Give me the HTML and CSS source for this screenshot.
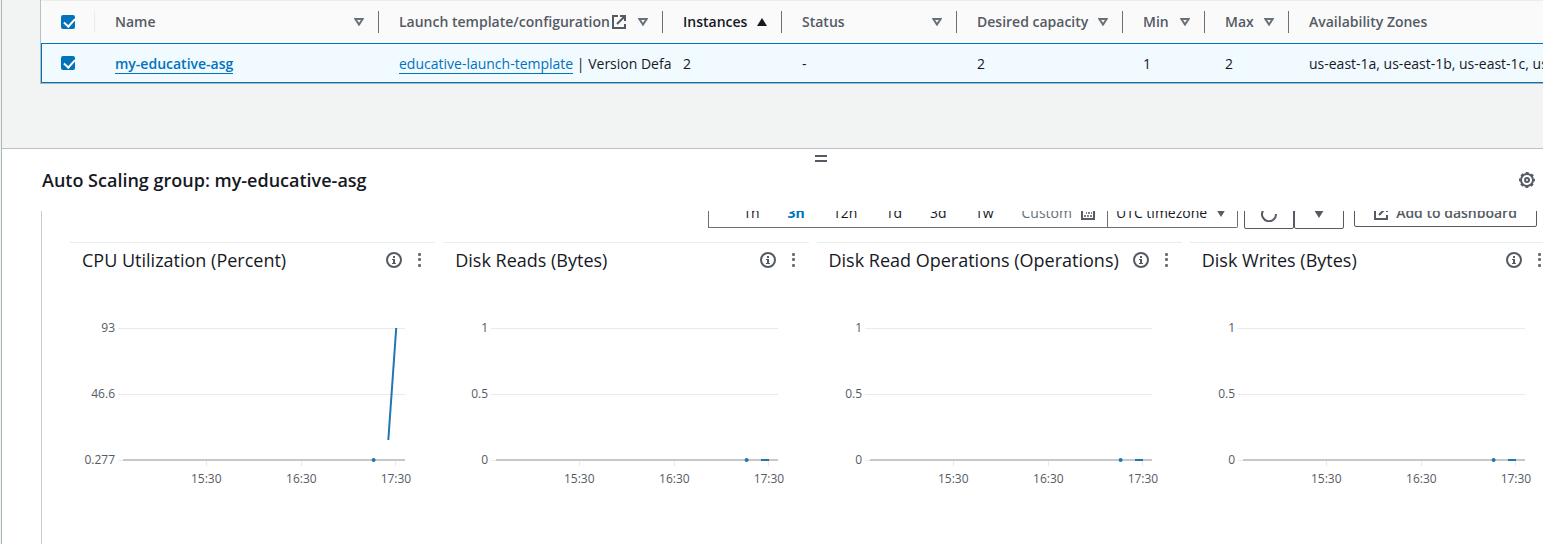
FILE: index.html
```html
<!DOCTYPE html>
<html lang="en">
<head>
<meta charset="utf-8">
<title>Auto Scaling groups</title>
<link rel="stylesheet" href="styles.css">
</head>
<body>
<svg class="sprite" aria-hidden="true">
  <symbol id="sort" viewBox="0 0 10 8"><path d="M1.3 1h7.4L5 6.6z" fill="none" stroke="currentColor" stroke-width="2"/></symbol>
  <symbol id="sorted" viewBox="0 0 10 8"><path d="M5 0l5 8H0z" fill="currentColor"/></symbol>
  <symbol id="caret" viewBox="0 0 10 8"><path d="M0 0h10L5 8z" fill="currentColor"/></symbol>
  <symbol id="external" viewBox="0 0 14 14"><path d="M6 1H1v12h12V9M8 1h5v5M13 1L5 9" fill="none" stroke="currentColor" stroke-width="2"/></symbol>
  <symbol id="info" viewBox="0 0 16 16"><circle cx="8" cy="8" r="7" fill="none" stroke="currentColor" stroke-width="2"/><path d="M7 4h2v2H7zM6 7h3v4h1v1H6v-1h1V8H6z" fill="currentColor"/></symbol>
  <symbol id="kebab" viewBox="0 0 4 14"><rect width="3" height="3" rx="1" fill="currentColor"/><rect y="5" width="3" height="3" rx="1" fill="currentColor"/><rect y="11" width="3" height="3" rx="1" fill="currentColor"/></symbol>
  <symbol id="calendar" viewBox="0 0 14 14"><path d="M1 3h12v10H1zM1 4h12M4 0v3M10 0v3" fill="none" stroke="currentColor" stroke-width="2"/><path d="M3 10h2M6 10h2M9 10h2M5 7h1M7 7h2M10 7h1" stroke="currentColor" stroke-width="1.5"/></symbol>
  <symbol id="refresh" viewBox="0 0 16 16"><path d="M15 8A7 7 0 1 1 12 2.500M12 0v4H8" fill="none" stroke="currentColor" stroke-width="2"/></symbol>
  <symbol id="gear" viewBox="0 0 16 16"><g fill="none" stroke="currentColor"><circle cx="8" cy="8" r="6" stroke-width="2"/><circle cx="8" cy="8" r="7.100" stroke-width="1.800" stroke-dasharray="2.900 2.676" stroke-dashoffset="1.450"/><circle cx="8" cy="8" r="2" stroke-width="2"/></g></symbol>
</svg>

<main class="console">
  <section class="groups">
    <table class="grid-table">
      <colgroup><col class="w-check"><col class="w-name"><col class="w-name"><col class="w-inst"><col class="w-status"><col class="w-desired"><col class="w-min"><col class="w-max"><col></colgroup>
      <thead>
        <tr>
          <th class="check light"><input type="checkbox" checked aria-label="Select all groups"></th>
          <th><div class="head">Name<svg class="sort"><use href="#sort"/></svg></div></th>
          <th><div class="head"><span class="with-icon">Launch template/configuration <svg class="i14"><use href="#external"/></svg></span><svg class="sort"><use href="#sort"/></svg></div></th>
          <th class="active"><div class="head">Instances<svg class="sort"><use href="#sorted"/></svg></div></th>
          <th><div class="head">Status<svg class="sort"><use href="#sort"/></svg></div></th>
          <th><div class="head">Desired capacity<svg class="sort"><use href="#sort"/></svg></div></th>
          <th><div class="head">Min<svg class="sort"><use href="#sort"/></svg></div></th>
          <th><div class="head">Max<svg class="sort"><use href="#sort"/></svg></div></th>
          <th class="last"><div class="head">Availability Zones</div></th>
        </tr>
      </thead>
      <tbody>
        <tr>
          <td class="check"><input type="checkbox" checked aria-label="Select my-educative-asg"></td>
          <td><a class="strong" href="#">my-educative-asg</a></td>
          <td><a href="#">educative-launch-template</a> | Version Defa</td>
          <td>2</td>
          <td>-</td>
          <td>2</td>
          <td>1</td>
          <td>2</td>
          <td>us-east-1a, us-east-1b, us-east-1c, us-east-1d</td>
        </tr>
      </tbody>
    </table>
  </section>

  <section class="panel">
    <button class="handle" aria-label="Resize panel"></button>
    <header class="panel-head">
      <h2>Auto Scaling group: my-educative-asg</h2>
      <button class="icon-btn" aria-label="Preferences"><svg class="i16"><use href="#gear"/></svg></button>
    </header>
    <div class="scroller">
      <div class="toolbar">
        <div class="ranges">
          <button>1h</button><button class="on">3h</button><button>12h</button><button>1d</button><button>3d</button><button>1w</button><button class="custom">Custom <svg class="i14"><use href="#calendar"/></svg></button>
        </div>
        <div class="zone">
          <select aria-label="Timezone"><option>UTC timezone</option></select>
          <svg class="caret"><use href="#caret"/></svg>
        </div>
        <div class="refresh">
          <button aria-label="Refresh"><svg class="i16"><use href="#refresh"/></svg></button>
          <button aria-label="Refresh options"><svg class="caret"><use href="#caret"/></svg></button>
        </div>
        <button class="add"><svg class="i14"><use href="#external"/></svg>Add to dashboard</button>
      </div>

      <div class="cards">
        <article class="card">
          <header><h3>CPU Utilization (Percent)</h3><button class="icon-btn" aria-label="Info"><svg class="i16"><use href="#info"/></svg></button><button class="icon-btn" aria-label="Menu"><svg class="kebab"><use href="#kebab"/></svg></button></header>
          <svg class="chart" role="img" aria-label="CPU Utilization">
            <svg class="plot" x="53" y="0">
              <g class="rule"><line x1="-5" x2="100%" y1="28" y2="28"/><line x1="-5" x2="100%" y1="94" y2="94"/><line x1="-5" x2="0" y1="160" y2="160"/><line x1="29.500%" x2="29.500%" y1="160" y2="166"/><line x1="63.200%" x2="63.200%" y1="160" y2="166"/><line x1="96.700%" x2="96.700%" y1="160" y2="166"/></g>
              <line class="axis" x1="0" x2="100%" y1="160" y2="160"/>
              <g class="ylab"><text x="-8" y="32">93</text><text x="-8" y="98">46.6</text><text x="-8" y="164">0.277</text></g>
              <g class="xlab"><text x="29.500%" y="183">15:30</text><text x="63.200%" y="183">16:30</text><text x="96.700%" y="183">17:30</text></g>
              <circle class="dot" cx="88.800%" cy="160" r="2"/>
              <line class="series" x1="94%" y1="140" x2="96.800%" y2="28"/>
            </svg>
          </svg>
        </article>
        <article class="card">
          <header><h3>Disk Reads (Bytes)</h3><button class="icon-btn" aria-label="Info"><svg class="i16"><use href="#info"/></svg></button><button class="icon-btn" aria-label="Menu"><svg class="kebab"><use href="#kebab"/></svg></button></header>
          <svg class="chart" role="img" aria-label="Disk Reads">
            <svg class="plot" x="53" y="0">
              <g class="rule"><line x1="-5" x2="100%" y1="28" y2="28"/><line x1="-5" x2="100%" y1="94" y2="94"/><line x1="-5" x2="0" y1="160" y2="160"/><line x1="29.500%" x2="29.500%" y1="160" y2="166"/><line x1="63.200%" x2="63.200%" y1="160" y2="166"/><line x1="96.700%" x2="96.700%" y1="160" y2="166"/></g>
              <line class="axis" x1="0" x2="100%" y1="160" y2="160"/>
              <g class="ylab"><text x="-8" y="32">1</text><text x="-8" y="98">0.5</text><text x="-8" y="164">0</text></g>
              <g class="xlab"><text x="29.500%" y="183">15:30</text><text x="63.200%" y="183">16:30</text><text x="96.700%" y="183">17:30</text></g>
              <circle class="dot" cx="88.800%" cy="160" r="2"/>
              <line class="series flat" x1="94%" y1="160" x2="96.800%" y2="160"/>
            </svg>
          </svg>
        </article>
        <article class="card">
          <header><h3>Disk Read Operations (Operations)</h3><button class="icon-btn" aria-label="Info"><svg class="i16"><use href="#info"/></svg></button><button class="icon-btn" aria-label="Menu"><svg class="kebab"><use href="#kebab"/></svg></button></header>
          <svg class="chart" role="img" aria-label="Disk Read Operations">
            <svg class="plot" x="53" y="0">
              <g class="rule"><line x1="-5" x2="100%" y1="28" y2="28"/><line x1="-5" x2="100%" y1="94" y2="94"/><line x1="-5" x2="0" y1="160" y2="160"/><line x1="29.500%" x2="29.500%" y1="160" y2="166"/><line x1="63.200%" x2="63.200%" y1="160" y2="166"/><line x1="96.700%" x2="96.700%" y1="160" y2="166"/></g>
              <line class="axis" x1="0" x2="100%" y1="160" y2="160"/>
              <g class="ylab"><text x="-8" y="32">1</text><text x="-8" y="98">0.5</text><text x="-8" y="164">0</text></g>
              <g class="xlab"><text x="29.500%" y="183">15:30</text><text x="63.200%" y="183">16:30</text><text x="96.700%" y="183">17:30</text></g>
              <circle class="dot" cx="88.800%" cy="160" r="2"/>
              <line class="series flat" x1="94%" y1="160" x2="96.800%" y2="160"/>
            </svg>
          </svg>
        </article>
        <article class="card">
          <header><h3>Disk Writes (Bytes)</h3><button class="icon-btn" aria-label="Info"><svg class="i16"><use href="#info"/></svg></button><button class="icon-btn" aria-label="Menu"><svg class="kebab"><use href="#kebab"/></svg></button></header>
          <svg class="chart" role="img" aria-label="Disk Writes">
            <svg class="plot" x="53" y="0">
              <g class="rule"><line x1="-5" x2="100%" y1="28" y2="28"/><line x1="-5" x2="100%" y1="94" y2="94"/><line x1="-5" x2="0" y1="160" y2="160"/><line x1="29.500%" x2="29.500%" y1="160" y2="166"/><line x1="63.200%" x2="63.200%" y1="160" y2="166"/><line x1="96.700%" x2="96.700%" y1="160" y2="166"/></g>
              <line class="axis" x1="0" x2="100%" y1="160" y2="160"/>
              <g class="ylab"><text x="-8" y="32">1</text><text x="-8" y="98">0.5</text><text x="-8" y="164">0</text></g>
              <g class="xlab"><text x="29.500%" y="183">15:30</text><text x="63.200%" y="183">16:30</text><text x="96.700%" y="183">17:30</text></g>
              <circle class="dot" cx="88.800%" cy="160" r="2"/>
              <line class="series flat" x1="94%" y1="160" x2="96.800%" y2="160"/>
            </svg>
          </svg>
        </article>
      </div>
    </div>
  </section>
</main>
</body>
</html>
```

FILE: styles.css
```css
* { box-sizing: border-box; }
body {
  margin: 0;
  background: #f2f3f3;
  color: #16191f;
  font: 14px/20px "Open Sans", "Noto Sans", sans-serif;
}
button, select { font: inherit; color: inherit; background: none; border: 0; padding: 0; margin: 0; }
svg { display: block; flex: none; }
.sprite { position: absolute; width: 0; height: 0; }
.i14 { width: 14px; height: 14px; }
.i16 { width: 16px; height: 16px; }
.caret { width: 10px; height: 8px; color: #545b64; }

.console {
  height: 100vh;
  margin-left: 1px;
  border-left: 1px solid #aab7b8;
  display: flex;
  flex-direction: column;
  overflow: hidden;
}

/* Groups table */
.groups { padding: 0 0 64px 38px; }
.grid-table {
  width: 100%;
  table-layout: fixed;
  border-collapse: separate;
  border-spacing: 0;
  border-left: 1px solid #b8c0c1;
  border-bottom: 1px solid #aab7b8;
  background: #fafafa;
}
.w-check { width: 54px; }
.w-name { width: 284px; }
.w-inst { width: 119px; }
.w-status { width: 175px; }
.w-desired { width: 166px; }
.w-min { width: 82px; }
.w-max { width: 84px; }
th {
  height: 43px;
  padding: 9px 0;
  border-top: 1px solid #eaeded;
  text-align: left;
  font-weight: 600;
  color: #545b64;
}
th.active { color: #16191f; }
.head {
  height: 22px;
  padding: 0 14px 0 20px;
  display: flex;
  align-items: center;
  justify-content: space-between;
  border-right: 1px solid #687078;
  white-space: nowrap;
}
.last .head { border-right: 0; }
.with-icon { display: flex; align-items: center; gap: 2px; }
.sort { width: 10px; height: 8px; color: #687078; }
.active .sort { color: #16191f; }
th.light { border-right: 0; background: linear-gradient(#eaeded, #eaeded) right 10px / 1px 22px no-repeat; }
td {
  height: 40px;
  padding: 1px 0 0 20px;
  border-top: 1px solid #0073bb;
  border-bottom: 1px solid #0073bb;
  background: #f1faff;
  white-space: nowrap;
}
td.check { border-left: 1px solid #0073bb; }
th.check { padding-left: 20px; }
td.check { padding: 0 0 0 19px; }
input[type="checkbox"] {
  appearance: none;
  display: block;
  width: 14px;
  height: 14px;
  margin: 0;
  border-radius: 2px;
  background: #0073bb;
}
input[type="checkbox"]::after {
  content: "";
  display: block;
  width: 5px;
  height: 9px;
  margin: 0 0 0 5px;
  border: solid #fff;
  border-width: 0 2px 2px 0;
  transform: translateY(1px) rotate(42deg);
}
a { color: #0073bb; text-decoration: none; border-bottom: 1px solid; }
.strong { font-weight: 600; }

/* Split panel */
.panel {
  flex: 1;
  min-height: 0;
  display: flex;
  flex-direction: column;
  background: #fff;
  border-top: 1px solid #bcc3c4;
}
.handle {
  align-self: center;
  width: 12px;
  height: 7px;
  margin: 6px 0 0 96px;
  border: solid #545b64;
  border-width: 2px 0;
}
.panel-head {
  display: flex;
  align-items: center;
  justify-content: space-between;
  padding: 6px 8px 19px 40px;
}
h2 { margin: 0; font-size: 18px; line-height: 24px; font-weight: 600; }
.icon-btn { display: flex; color: #545b64; }
.scroller {
  flex: 1;
  min-height: 0;
  margin-left: 39px;
  border-left: 1px solid #c8cccd;
  overflow: hidden;
}

/* The toolbar is partly scrolled under the panel header */
.toolbar {
  display: flex;
  align-items: flex-end;
  justify-content: flex-end;
  height: 33px;
  margin-top: -15px;
  margin-bottom: 13px;
  padding-right: 6px;
}
.ranges {
  display: flex;
  justify-content: space-between;
  align-items: center;
  width: 400px;
  height: 32px;
  padding: 2px 12px 0 34px;
  border: 1px solid #687078;
  margin-bottom: 1px;
}
.ranges .on { color: #0073bb; font-weight: 700; }
.custom { display: flex; align-items: center; gap: 9px; color: #687078; }
.custom svg { color: #545b64; }
.zone { display: grid; align-items: center; height: 32px; margin-bottom: 1px; }
.zone select {
  grid-area: 1 / 1;
  appearance: none;
  width: 130px;
  height: 32px;
  padding: 2px 24px 0 8px;
  border: 1px solid #687078;
  border-left: 0;
  border-radius: 0 2px 2px 0;
}
.zone .caret { grid-area: 1 / 1; justify-self: end; margin: 2px 12px 0 0; pointer-events: none; }
.refresh { display: flex; margin: 0 10px 0 6px; }
.refresh button {
  display: grid;
  place-items: center;
  width: 50px;
  height: 32px;
  padding-top: 2px;
  border: 1px solid #545b64;
  border-radius: 2px;
  color: #545b64;
}
.add {
  display: flex;
  align-items: center;
  justify-content: center;
  gap: 8px;
  width: 183px;
  height: 30px;
  margin-bottom: 2px;
  padding-top: 2px;
  border: 1px solid #545b64;
  border-radius: 2px;
  color: #545b64;
  font-weight: 600;
}

/* Metric cards */
.cards {
  display: grid;
  grid-template-columns: repeat(4, minmax(0, 1fr));
  gap: 8px;
  margin: 0 -12px 0 28px;
}
.card { border-top: 1px solid #eaeded; }
.card header {
  display: flex;
  align-items: center;
  padding: 5px 13px 0 12px;
}
.card .kebab { width: 4px; height: 14px; margin-left: 16px; color: #687078; }
h3 { margin: 0; flex: 1; font-size: 18px; line-height: 24px; font-weight: 400; white-space: nowrap; }
.chart { width: 100%; height: 200px; margin-top: 28px; }
.plot { width: calc(100% - 83px); height: 200px; overflow: visible; }
.rule line { stroke: #eaeaea; stroke-width: 1; shape-rendering: crispEdges; }
.axis { stroke: #c8c8c8; stroke-width: 2; shape-rendering: crispEdges; }
.chart text { fill: #545b64; font-size: 12px; }
.ylab { text-anchor: end; }
.xlab { text-anchor: middle; }
.dot { fill: #1f77b4; }
.series { stroke: #1f77b4; stroke-width: 2; }
.flat { shape-rendering: crispEdges; }
```
